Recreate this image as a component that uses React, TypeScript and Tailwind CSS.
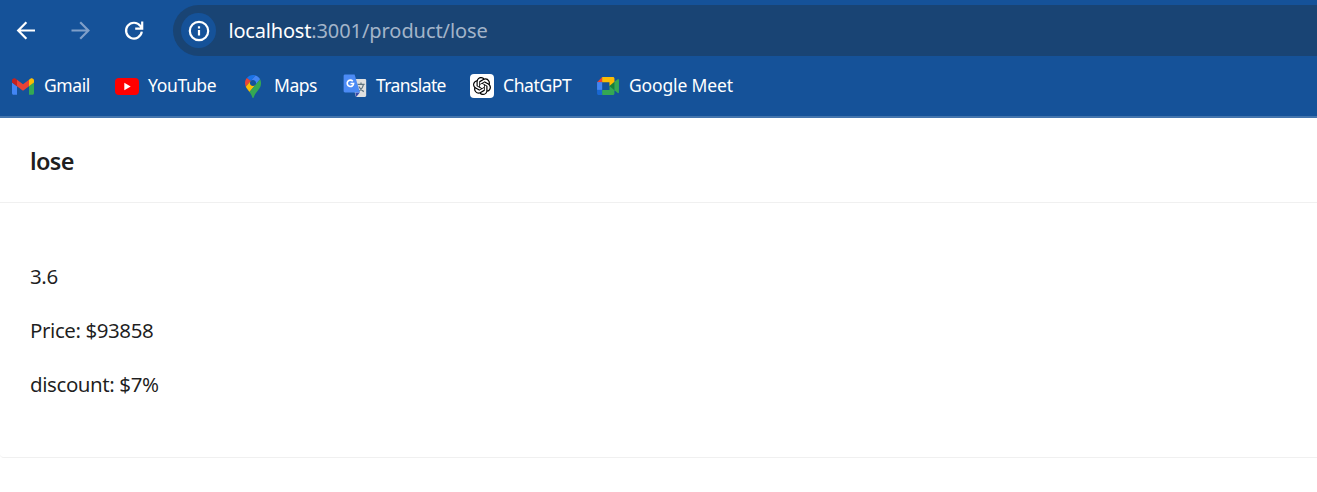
import type { ReactNode } from "react";
import { SiOpenai } from "react-icons/si";

function GmailIcon() {
  return (
    <svg viewBox="52 42 88 66" className="h-[17px] w-[22px]">
      <path fill="#4285f4" d="M58 108h14V74L52 59v43c0 3.32 2.69 6 6 6" />
      <path fill="#34a853" d="M120 108h14c3.32 0 6-2.69 6-6V59l-20 15" />
      <path fill="#fbbc04" d="M120 48v26l20-15v-8c0-7.42-8.47-11.65-14.4-7.2" />
      <path fill="#ea4335" d="M72 74V48l24 18 24-18v26L96 92" />
      <path fill="#c5221f" d="M52 51v8l20 15V48l-5.6-4.4c-5.94-4.45-14.4-.22-14.4 7.2" />
    </svg>
  );
}

function YouTubeIcon() {
  return (
    <svg viewBox="0 0 24 17" className="h-[17px] w-6">
      <rect width="24" height="17" rx="4" fill="#f00" />
      <path fill="#fff" d="M9.3 4.8v7.4l6.4-3.7z" />
    </svg>
  );
}

function MapsIcon() {
  return (
    <svg viewBox="0 0 92.3 132.3" className="h-[23px] w-4">
      <path fill="#1a73e8" d="M60.2 2.2C55.8.8 51 0 46.1 0 32 0 19.3 6.4 10.8 16.5l21.8 18.3L60.2 2.2z" />
      <path fill="#ea4335" d="M10.8 16.5C4.1 24.5 0 34.9 0 46.1c0 8.7 1.7 15.7 4.6 22l28-33.3-21.8-18.3z" />
      <path fill="#4285f4" d="M46.2 28.5c9.8 0 17.7 7.9 17.7 17.7 0 4.3-1.6 8.3-4.2 11.4 0 0 13.9-16.6 27.5-32.7-5.6-10.8-15.3-19-27-22.7L32.6 34.8c3.3-3.8 8.1-6.3 13.6-6.3" />
      <path fill="#fbbc04" d="M46.2 63.8c-9.8 0-17.7-7.9-17.7-17.7 0-4.3 1.5-8.3 4.1-11.3l-28 33.3c4.8 10.6 12.8 19.2 21 29.9l34.1-40.5c-3.3 3.9-8.1 6.3-13.5 6.3" />
      <path fill="#34a853" d="M59.1 109.2c15.4-24.1 33.3-35 33.3-63 0-7.7-1.9-14.9-5.2-21.3L25.6 98c2.6 3.4 5.3 7.3 7.9 11.3 9.4 14.5 6.8 23.1 12.8 23.1s3.4-8.7 12.8-23.2" />
    </svg>
  );
}

function TranslateIcon() {
  return (
    <svg viewBox="0 0 24 24" className="size-6">
      <path fill="#e0e0e0" d="M8 5h14c.8 0 1.200.6 1.200 1.400v15.200c0 .8-.6 1.400-1.400 1.400H13z" />
      <path fill="#3749ab" d="M12.200 18.400h4.600L13.200 23z" />
      <path
        fill="none"
        stroke="#607580"
        strokeWidth="1.200"
        d="M14.400 10.400h7.200M18 8.600v1.800M20.400 10.600c-.7 3-2.700 5.600-5.200 7M15.800 12.600c1 2 2.800 3.800 5 5"
      />
      <path fill="#4c8bf5" d="M2 .6h9.600L17 18.500H2C1.200 18.500.6 17.900.6 17.100V2C.6 1.200 1.200.6 2 .6z" />
      <path
        fill="none"
        stroke="#fff"
        strokeWidth="1.600"
        d="M9.800 7.200A3.200 3.200 0 1 0 10.600 9.500H7.500"
      />
    </svg>
  );
}

function ChatGptIcon() {
  return (
    <span className="flex size-6 items-center justify-center rounded-[4px] bg-white">
      <SiOpenai className="size-[18px] text-black" />
    </span>
  );
}

function MeetIcon() {
  return (
    <svg viewBox="0 0 87.5 72" className="h-[18px] w-[22px]">
      <path fill="#188038" d="M49.5 36l8.53 9.75 11.47 7.33 2-17.02-2-16.64-11.69 6.44z" />
      <path fill="#1967d2" d="M0 51.5V66c0 3.315 2.685 6 6 6h14.5l3-10.96-3-9.54-9.95-3z" />
      <path fill="#ea4335" d="M20.5 0L0 20.5l10.55 3 9.95-3 2.95-9.41z" />
      <path fill="#4285f4" d="M20.5 20.5H0v31h20.5z" />
      <path
        fill="#34a853"
        d="M82.6 8.68L69.5 19.42v33.66l13.16 10.79c1.97 1.54 4.85.135 4.85-2.37V11c0-2.535-2.945-3.925-4.91-2.32zM49.5 36v15.5h-29V72h43c3.315 0 6-2.685 6-6V53.08z"
      />
      <path fill="#fbbc04" d="M63.5 0h-43v20.5h29V36l20-16.57V6c0-3.315-2.685-6-6-6z" />
    </svg>
  );
}

type BookmarkProps = { icon: ReactNode; label: string; width: string; tracking: string };

const bookmarks: BookmarkProps[] = [
  { icon: <GmailIcon />, label: "Gmail", width: "w-[104px]", tracking: "tracking-[-0.4px]" },
  { icon: <YouTubeIcon />, label: "YouTube", width: "w-[126px]", tracking: "tracking-[-0.35px]" },
  { icon: <MapsIcon />, label: "Maps", width: "w-[102px]", tracking: "tracking-[-0.45px]" },
  { icon: <TranslateIcon />, label: "Translate", width: "w-[127px]", tracking: "tracking-[-0.6px]" },
  { icon: <ChatGptIcon />, label: "ChatGPT", width: "w-[126px]", tracking: "tracking-[-0.4px]" },
  { icon: <MeetIcon />, label: "Google Meet", width: "w-[150px]", tracking: "tracking-[-0.15px]" },
];

function Bookmark({ icon, label, width, tracking }: BookmarkProps) {
  return (
    <a className={`flex shrink-0 items-center gap-[9px] ${width}`}>
      <span className="flex w-6 shrink-0 justify-center">{icon}</span>
      <span className={`pb-[2px] text-[17.5px] leading-6 whitespace-nowrap text-white ${tracking}`}>{label}</span>
    </a>
  );
}

function Toolbar() {
  return (
    <div className="flex h-[61px] items-start pt-[5px]">
      <div className="flex h-[51px] w-[173px] shrink-0 items-center gap-[26.5px] pl-[13px]">
        <svg viewBox="0 0 27 27" className="size-[27px]" fill="none" stroke="#fff" strokeWidth="2.2">
          <path d="M22 13.500H5.500M13.400 5.300L5.200 13.500l8.200 8.200" />
        </svg>
        <svg viewBox="0 0 27 27" className="size-[27px]" fill="none" stroke="#7f9fc9" strokeWidth="2.2">
          <path d="M4.500 13.500H21M13.200 5.300l8.200 8.200-8.200 8.200" />
        </svg>
        <svg viewBox="0 0 27 27" className="size-[27px]" fill="none" stroke="#fff" strokeWidth="2.2">
          <path d="M21.800 14.700A7.900 7.900 0 1 1 20.300 8.900L21.700 11M22.200 4.600v7h-7" />
        </svg>
      </div>
      <div className="flex h-[51px] min-w-0 grow items-center rounded-l-full bg-[#194474] pl-2">
        <span className="flex size-[35px] items-center justify-center rounded-full bg-[#155299]">
          <svg viewBox="0 0 22 22" className="size-[22px]" fill="none" stroke="#fff">
            <circle cx="11" cy="11" r="9.200" strokeWidth="2.200" />
            <path d="M11 10v5.600M11 6.200v2.200" strokeWidth="2.200" />
          </svg>
        </span>
        <span className="ml-[12.5px] text-[20px] leading-7 whitespace-nowrap text-[#a3b4c9] tracking-[-0.07px]">
          <span className="tracking-[-0.2px] text-white">localhost</span>:3001/product/lose
        </span>
      </div>
    </div>
  );
}

export default function App() {
  return (
    <div className="h-[492px] w-full overflow-hidden bg-white font-['Noto_Sans','Open_Sans',sans-serif]">
      <header className="h-[118px] border-b-2 border-[#4475ad] bg-[#155299]">
        <Toolbar />
        <nav className="flex h-[50px] items-center pl-[11px]">
          {bookmarks.map((b) => (
            <Bookmark key={b.label} {...b} />
          ))}
        </nav>
      </header>
      <main className="h-[340px] rounded-bl-[4px] border-b border-[#f0f0f0] text-black/88">
        <div className="flex h-[85px] items-center border-b border-[#f0f0f0] pt-[2px] pl-[30px]">
          <h1 className="text-[23.5px] leading-9 font-semibold tracking-[-0.7px]">lose</h1>
        </div>
        <div className="flex flex-col gap-[21px] pt-[57px] pl-[30px] text-[20.5px] leading-[33px] tracking-[-0.42px]">
          <p>3.6</p>
          <p>Price: $93858</p>
          <p>discount: $7%</p>
        </div>
      </main>
    </div>
  );
}
